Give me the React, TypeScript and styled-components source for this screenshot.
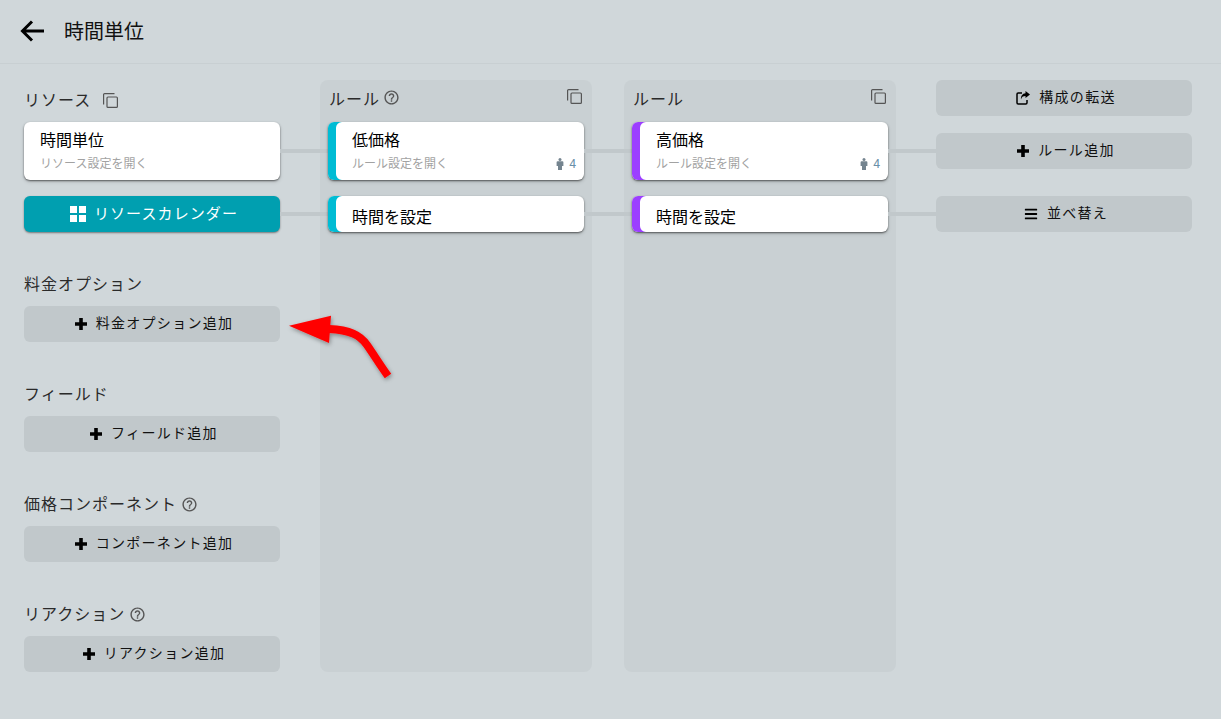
import React from "react";
import styled, { createGlobalStyle } from "styled-components";
import { FaBars } from "react-icons/fa";

const Global = createGlobalStyle`
  html, body { margin: 0; padding: 0; height: 100%; background: #d0d7da; }
  body { font-family: Roboto, "Noto Sans CJK JP", sans-serif; color: #111; overflow: hidden; }
`;
const Page = styled.div`position: relative; width: 1221px; height: 719px; background: #d0d7da;`;
const Header = styled.header`
  height: 64px; box-sizing: border-box; border-bottom: 1px solid #c8cfd2;
  display: flex; align-items: center; padding: 0 0 2px 20px; gap: 20px;
`;
const Title = styled.h1`margin: 0; font-size: 20px; font-weight: 400; line-height: 28px; color: #111; padding-top: 2px;`;
const Board = styled.main`display: flex; gap: 40px; padding: 16px 0 0 24px;`;
const RuleGroup = styled.div`display: flex; gap: 32px;`;
const LeftCol = styled.section`display: flex; flex-direction: column; width: 256px;`;
const RuleCol = styled.section`
  width: 272px; height: 592px; box-sizing: border-box; background: #c9d0d3; border-radius: 8px; padding: 0 8px;
  display: flex; flex-direction: column;
`;
const ActionCol = styled.section`display: flex; flex-direction: column; width: 256px;`;
const ColHead = styled.div`height: 42px; display: flex; justify-content: space-between; padding: 9px 2px 0 1px; box-sizing: border-box;`;
const LeftHead = styled.div`height: 42px; display: flex; align-items: center; gap: 12px; padding-bottom: 1px; box-sizing: border-box;`;
const Label = styled.span`font-size: 16px; letter-spacing: 1px; line-height: 20px; color: #2a2a2a; display: inline-flex; align-items: center;`;
const RuleLabel = styled(Label)`margin-top: 1px;`;
const HeadGroup = styled.span`display: inline-flex; align-items: flex-start; gap: 3px; height: 20px;`;
const Card = styled.div<{ $accent?: string; $link?: boolean; $tall?: boolean }>`
  position: relative; box-sizing: border-box; width: 256px; height: ${p => (p.$tall ? 58 : 36)}px;
  background: #fff; border-radius: 6px; padding: ${p => (p.$accent ? "0 8px 0 24px" : "0 8px 0 16px")};
  box-shadow: ${p => (p.$accent ? `inset 8px 0 0 ${p.$accent}, ` : "")}0 1px 2px rgba(0,0,0,.55), 0 2px 4px rgba(0,0,0,.12);
  ${p => p.$link ? `&::after { content: ""; position: absolute; left: 100%; width: 48px; top: 50%; margin-top: -2px; height: 4px; background: #c1c8cb; }` : ""}
`;
const CardTitle = styled.div<{ $low?: boolean }>`font-size: 16px; line-height: 22px; color: #000; padding-top: ${p => (p.$low ? 11 : 8)}px;`;
const CardSub = styled.div`
  display: flex; justify-content: space-between; align-items: center; font-size: 12px; line-height: 16px; color: #a2a2a2; margin-top: 4px;
`;
const Count = styled.span`display: inline-flex; align-items: center; gap: 5px; font-family: Roboto, sans-serif; font-size: 12px; color: #6a8fa8; svg { color: #74848f; }`;
const Spacer = styled.div<{ $h: number }>`height: ${p => p.$h}px; flex: none;`;
const CalendarBtn = styled.button`
  position: relative; width: 256px; height: 36px; border: 0; border-radius: 6px; background: #009fb0; color: #fff;
  display: flex; align-items: center; justify-content: center; gap: 8px; font: inherit; font-size: 15px; letter-spacing: 1.1px; padding: 0 0 3px 4px;
  box-shadow: 0 1px 2px rgba(0,0,0,.45);
  svg { margin-top: 3px; }
  &::after { content: ""; position: absolute; left: 100%; width: 48px; top: 50%; margin-top: -2px; height: 4px; background: #c1c8cb; }
`;
const ActionBtn = styled.button`
  width: 256px; height: 36px; flex: none; border: 0; border-radius: 6px; background: #c1c8cb; color: #111;
  display: flex; align-items: center; justify-content: center; gap: 9px; font: inherit; font-size: 14px; letter-spacing: 1.3px; padding: 0 0 5px 4px;
  svg { color: #000; flex: none; margin-top: 5px; }
`;
const Section = styled.div`display: flex; flex-direction: column;`;
const SectionHead = styled.div`height: 36px; display: flex; align-items: center; gap: 4px; box-sizing: border-box; padding-bottom: 7px;`;
const Arrow = styled.svg`position: absolute; left: 285px; top: 310px; overflow: visible;`;

const CopyIcon = () => (
  <svg width="15" height="15" viewBox="0 0 15 15" fill="none" stroke="#555" strokeWidth="1.2">
    <rect x="4" y="4" width="10.4" height="10.4" rx="1" />
    <path d="M11.5 .6H1.6a1 1 0 0 0-1 1v9.9" />
  </svg>
);
const HelpIcon = () => (
  <svg width="17" height="17" viewBox="0 0 24 24" fill="#555">
    <path d="M11 18h2v-2h-2v2zm1-16C6.48 2 2 6.48 2 12s4.48 10 10 10 10-4.48 10-10S17.52 2 12 2zm0 18c-4.41 0-8-3.59-8-8s3.59-8 8-8 8 3.59 8 8-3.59 8-8 8zm0-14c-2.21 0-4 1.79-4 4h2c0-1.1.9-2 2-2s2 .9 2 2c0 2-3 1.75-3 5h2c0-2.25 3-2.5 3-5 0-2.21-1.79-4-4-4z" />
  </svg>
);
const BackIcon = () => (
  <svg width="24" height="22" viewBox="0 0 24 22" fill="none" stroke="#000" strokeWidth="3">
    <path d="M24 11H4M12 1.5L2.5 11l9.5 9.5" />
  </svg>
);
const GridIcon = () => (
  <svg width="16" height="16" viewBox="0 0 16 16" fill="#fff">
    <rect x="0" y="0" width="7" height="7" />
    <rect x="9" y="0" width="7" height="7" />
    <rect x="0" y="9" width="7" height="7" />
    <rect x="9" y="9" width="7" height="7" />
  </svg>
);
const ShareIcon = () => (
  <svg width="14" height="14" viewBox="0 0 14 14">
    <path d="M6 2H2.2A1.2 1.2 0 0 0 1 3.2v8.6A1.2 1.2 0 0 0 2.2 13h7.6a1.2 1.2 0 0 0 1.2-1.2V9" fill="none" stroke="#000" strokeWidth="1.5" />
    <path d="M9.5 0L14 3.5 9.5 7V5C7 5 5.5 6 5 8.5 4.6 5 6.5 2.5 9.5 2.2Z" fill="#000" />
  </svg>
);
const PlusIcon = () => (
  <svg width="12" height="12" viewBox="0 0 12 12" fill="#000">
    <path d="M4.2 0h3.6v4.2H12v3.6H7.8V12H4.2V7.8H0V4.2h4.2z" />
  </svg>
);
const PersonIcon = () => (
  <svg width="8" height="12" viewBox="0 0 8 12" fill="currentColor">
    <circle cx="4" cy="1.5" r="1.5" />
    <path d="M1.6 3.3h4.8a1 1 0 0 1 1 1V8H6v4H2V8H.6V4.3a1 1 0 0 1 1-1z" />
  </svg>
);

const RuleCard = ({ name, accent, sub }: { name: string; accent: string; sub: string }) => (
  <Card $accent={accent} $tall $link>
    <CardTitle>{name}</CardTitle>
    <CardSub>
      <span>{sub}</span>
      <Count><PersonIcon />4</Count>
    </CardSub>
  </Card>
);

const sections = [
  { title: "料金オプション", add: "料金オプション追加" },
  { title: "フィールド", add: "フィールド追加" },
  { title: "価格コンポーネント", add: "コンポーネント追加", help: true },
  { title: "リアクション", add: "リアクション追加", help: true },
];

export default function App() {
  return (
    <Page>
      <Global />
      <Header>
        <BackIcon />
        <Title>時間単位</Title>
      </Header>
      <Board>
        <LeftCol>
          <LeftHead><Label>リソース</Label><CopyIcon /></LeftHead>
          <Card $tall $link>
            <CardTitle>時間単位</CardTitle>
            <CardSub><span>リソース設定を開く</span></CardSub>
          </Card>
          <Spacer $h={16} />
          <CalendarBtn><GridIcon />リソースカレンダー</CalendarBtn>
          <Spacer $h={38} />
          {sections.map((s, i) => (
            <React.Fragment key={s.title}>
              {i > 0 && <Spacer $h={38} />}
              <Section>
                <SectionHead>
                  <Label>{s.title}</Label>
                  {s.help && <HelpIcon />}
                </SectionHead>
                <ActionBtn><PlusIcon />{s.add}</ActionBtn>
              </Section>
            </React.Fragment>
          ))}
        </LeftCol>
        <RuleGroup>
          <RuleCol>
            <ColHead>
              <HeadGroup><RuleLabel>ルール</RuleLabel><HelpIcon /></HeadGroup>
              <CopyIcon />
            </ColHead>
            <RuleCard name="低価格" accent="#00bcd4" sub="ルール設定を開く" />
            <Spacer $h={16} />
            <Card $accent="#00bcd4" $link><CardTitle $low>時間を設定</CardTitle></Card>
          </RuleCol>
          <RuleCol>
            <ColHead>
              <HeadGroup><RuleLabel>ルール</RuleLabel></HeadGroup>
              <CopyIcon />
            </ColHead>
            <RuleCard name="高価格" accent="#9c3fff" sub="ルール設定を開く" />
            <Spacer $h={16} />
            <Card $accent="#9c3fff" $link><CardTitle $low>時間を設定</CardTitle></Card>
          </RuleCol>
        </RuleGroup>
        <ActionCol>
          <ActionBtn><ShareIcon />構成の転送</ActionBtn>
          <Spacer $h={17} />
          <ActionBtn><PlusIcon />ルール追加</ActionBtn>
          <Spacer $h={27} />
          <ActionBtn><FaBars size={14} />並べ替え</ActionBtn>
        </ActionCol>
      </Board>
      <Arrow width="110" height="72" viewBox="0 0 110 72">
        <defs>
          <filter id="arrowShadow" x="-20%" y="-20%" width="140%" height="140%">
            <feDropShadow dx="1" dy="2" stdDeviation="2" floodColor="#000" floodOpacity="0.35" />
          </filter>
        </defs>
        <g filter="url(#arrowShadow)">
          <path d="M4 15.7L46 5.7L44 33Z" fill="#ff0000" />
          <path d="M44 19C65 20 75 25 82 35C89 45 95 55 103 66" fill="none" stroke="#ff0000" strokeWidth="8" />
        </g>
      </Arrow>
    </Page>
  );
}
